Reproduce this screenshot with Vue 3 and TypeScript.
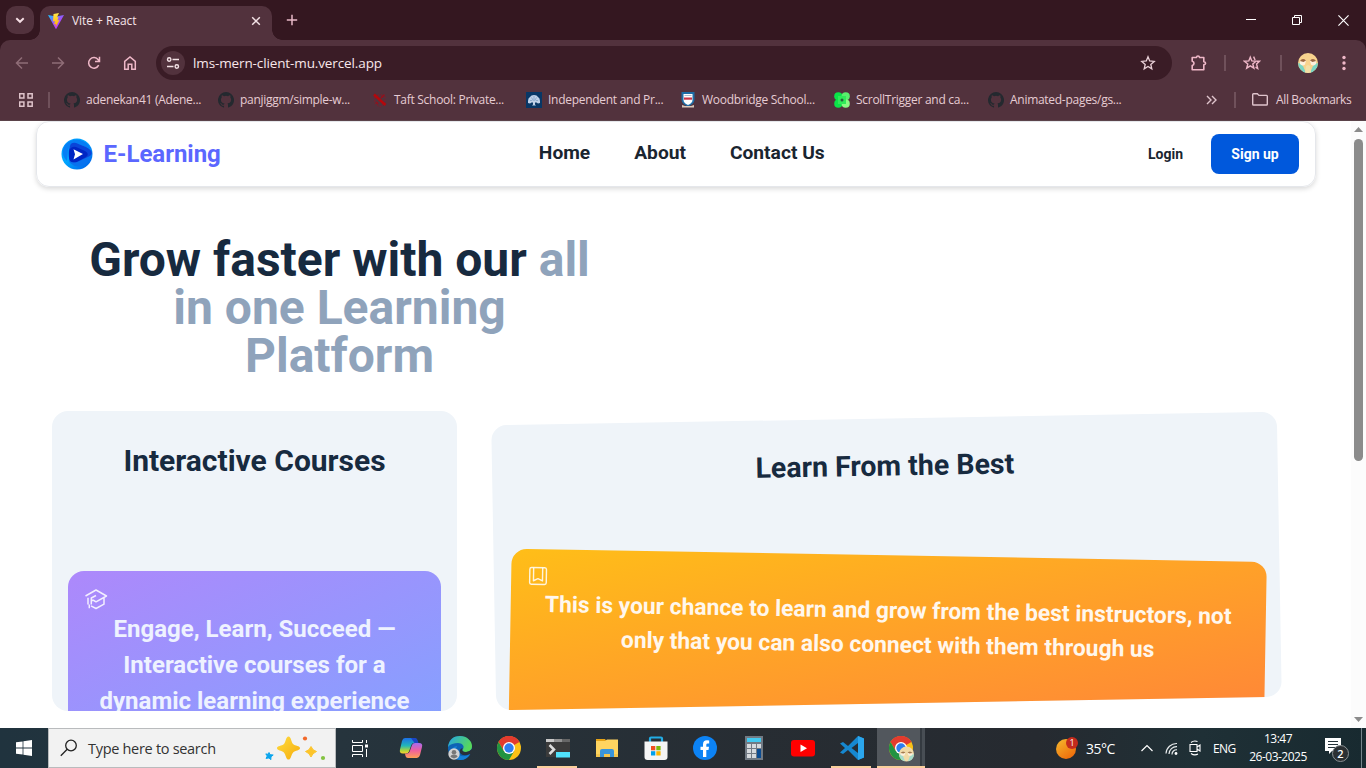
<script setup lang="ts">
interface Bookmark { icon: string; label: string }

const bookmarks: Bookmark[] = [
  { icon: 'github', label: 'adenekan41 (Adene...' },
  { icon: 'github', label: 'panjiggm/simple-w...' },
  { icon: 'taft', label: 'Taft School: Private...' },
  { icon: 'tree', label: 'Independent and Pr...' },
  { icon: 'crest', label: 'Woodbridge School...' },
  { icon: 'clover', label: 'ScrollTrigger and ca...' },
  { icon: 'github', label: 'Animated-pages/gs...' },
]

const links: string[] = ['Home', 'About', 'Contact Us']

const apps: string[] = ['copilot', 'edge', 'chrome', 'terminal', 'files', 'store', 'facebook', 'calc', 'youtube', 'vscode', 'chromeUser']
const running = new Set<string>(['terminal', 'vscode', 'chromeUser'])
</script>

<template>
  <div class="screen">
    <header class="browser">
      <div class="tabstrip">
        <button class="tab-menu"><svg width="12" height="12" viewBox="0 0 12 12"><path d="M2.300 4.200 6 7.800l3.700-3.600" fill="none" stroke="#f6dfe5" stroke-width="1.900" /></svg></button>
        <div class="tab">
          <svg class="vite" width="16" height="16" viewBox="0 0 32 32">
            <defs>
              <linearGradient id="va" x1="0" y1="0" x2=".7" y2=".9"><stop stop-color="#14c8ff" /><stop offset=".6" stop-color="#a050fc" /><stop offset="1" stop-color="#bd34fe" /></linearGradient>
              <linearGradient id="vb" x1=".4" y1="0" x2=".5" y2="1"><stop stop-color="#ffe84a" /><stop offset="1" stop-color="#ffa800" /></linearGradient>
            </defs>
            <path d="M0 4 16 7 32 4 17 31q-1 1.5-2 0Z" fill="url(#va)" />
            <path d="m22 0-11 2-1 15 4-1-2 7 4-1-1 7 8-15-4 1 2-7-3 .5Z" fill="url(#vb)" />
          </svg>
          <span class="tab-title">Vite + React</span>
          <svg class="close" width="10" height="10" viewBox="0 0 10 10"><path d="m1.2 1.2 7.6 7.6m0-7.6L1.2 8.8" stroke="#f3e2e6" stroke-width="1.5" /></svg>
        </div>
        <svg class="plus" width="12" height="12" viewBox="0 0 12 12"><path d="M6 .8v10.4M.8 6h10.4" stroke="#e8b9c6" stroke-width="1.5" /></svg>
        <div class="window-buttons">
          <svg width="10" height="10" viewBox="0 0 10 10"><path d="M0 4.5h10" stroke="#fff" /></svg>
          <svg width="10" height="10" viewBox="0 0 10 10"><path d="M.5 2.5h7v7h-7ZM2.5 2.5v-2h7v7h-2" fill="none" stroke="#fff" /></svg>
          <svg width="11" height="11" viewBox="0 0 10 10"><path d="m.4.4 9.2 9.2m0-9.2L.4 9.6" stroke="#fff" stroke-width="1.05" /></svg>
        </div>
      </div>

      <div class="toolbar">
        <svg class="nav-btn dim" width="16" height="16" viewBox="0 0 16 16"><path d="M14 8H3m5-5.5L2.5 8 8 13.500" /></svg>
        <svg class="nav-btn dim" width="16" height="16" viewBox="0 0 16 16"><path d="M2 8h11M8 2.500 13.500 8 8 13.500" /></svg>
        <svg class="nav-btn" width="16" height="16" viewBox="0 0 16 16"><path d="M12.700 10.200A5.300 5.300 0 1 1 12.200 4.700L13.500 6.300M13.500 1.800v4.700H9" /></svg>
        <svg class="nav-btn" width="16" height="16" viewBox="0 0 16 16"><path d="M2.700 14.200V6.300L8 2l5.300 4.300v7.900H9.800V9.300H6.200v4.900Z" /></svg>
        <div class="address">
          <span class="site-info"><svg width="14" height="14" viewBox="0 0 14 14"><path d="M6.500 3.500H13M1 10.500h6.500" stroke="#f3e2e6" stroke-width="1.5" /><circle cx="3.200" cy="3.500" r="1.700" fill="none" stroke="#f3e2e6" stroke-width="1.400" /><circle cx="10.800" cy="10.500" r="1.700" fill="none" stroke="#f3e2e6" stroke-width="1.400" /></svg></span>
          <span class="url">lms-mern-client-mu.vercel.app</span>
          <svg class="star" width="16" height="16" viewBox="0 0 16 16"><path d="m8 1.800 1.700 4.200 4.500.4-3.400 3 1 4.400L8 11.500l-3.800 2.300 1-4.400-3.400-3L6.300 6Z" fill="none" stroke="#ead1d8" stroke-width="1.300" /></svg>
        </div>
        <svg class="ext" width="18" height="18" viewBox="0 0 18 18"><path d="M2.200 3.500h4.300q.1-1.500 1.500-1.500T9.500 3.500h4.300v4.300q1.800.2 1.800 1.500t-1.800 1.500v5H2.200v-4.300Q4 11 4 9.300T2.200 7.200Z" fill="none" stroke="#efb8c8" stroke-width="1.600" stroke-linejoin="round" /></svg>
        <i class="divider d1"></i>
        <svg class="fav" width="18" height="18" viewBox="0 0 18 18"><path d="m7.300 3.200 1.500 3.700 4.300.3-3.300 2.800 1.100 4.200-3.600-2.300-3.600 2.300 1.100-4.200-3.400-2.800 4.400-.3ZM10.600 2.600l1.500 3.400M13.800 7.200h2.700l-2.900 2.700 1.100 4.600-2.200-1.300" fill="none" stroke="#efb8c8" stroke-width="1.400" /></svg>
        <i class="divider d2"></i>
        <svg class="avatar" width="20" height="20" viewBox="0 0 20 20"><circle cx="10" cy="10" r="10" fill="#f8d38e" /><path d="M0 10q3 0 5 3l3 6.800Q1 18 0 10M20 10q-3 0-5 3l-3 6.800q7-1.800 8-9.800" fill="#7ad6c4" /><path d="M2 8.500q2-3 6-1l-1 4q-3 2-5-.5ZM18 8.500q-2-3-6-1l1 4q3 2 5-.5Z" fill="#fff0dc" /><path d="M2 8q2.500-3.500 6-.5L5.500 9Zm16 0q-2.500-3.500-6-.5L14.500 9Z" fill="#9c6843" /><path d="m8 13 2-1 2 1 1 6.500-3 .5-3-.5Z" fill="#f4dfa6" /></svg>
        <svg class="dots" width="4" height="16" viewBox="0 0 4 16"><g fill="#efb8c8"><circle cx="2" cy="2.500" r="1.700" /><circle cx="2" cy="8" r="1.700" /><circle cx="2" cy="13.500" r="1.700" /></g></svg>
      </div>

      <div class="bookmarks">
        <svg class="grid-icon" width="14" height="14" viewBox="0 0 14 14"><path d="M.7.7h4.200v4.200H.7ZM9 .7h4.200v4.200H9ZM.7 9h4.200v4.200H.7ZM9 9h4.200v4.200H9Z" fill="none" stroke="#dec3ca" stroke-width="1.500" /></svg>
        <i class="divider"></i>
        <div class="bookmark-list">
          <div v-for="(b, i) in bookmarks" :key="i" class="bookmark">
            <svg width="16" height="16" viewBox="0 0 16 16">
              <path v-if="b.icon === 'github'" fill="#24292f" d="M8 0a8 8 0 0 0-2.530 15.590c.4.070.550-.170.550-.380v-1.490c-2.230.480-2.700-.950-2.700-.950-.360-.920-.890-1.170-.890-1.170-.730-.500.050-.490.050-.490.810.060 1.230.830 1.230.830.720 1.230 1.880.870 2.340.670.070-.520.280-.870.510-1.070-1.780-.200-3.640-.890-3.640-3.950 0-.870.310-1.590.820-2.150-.080-.200-.360-1.020.080-2.120 0 0 .670-.210 2.200.820a7.700 7.700 0 0 1 4 0c1.530-1.040 2.200-.820 2.200-.820.440 1.100.160 1.920.080 2.120.510.560.820 1.270.820 2.150 0 3.070-1.870 3.750-3.650 3.950.290.250.540.730.540 1.480v2.200c0 .210.150.460.550.380A8 8 0 0 0 8 0" />
              <g v-else-if="b.icon === 'taft'"><path d="M2.500 3h10.500v8.500L8 15l-5-3.500Z" fill="none" stroke="#8c1727" stroke-dasharray="1.500 1.500" /><path d="M2 2.500 13.500 13" stroke="#b4070b" stroke-width="2.500" /><path d="m12 3-3 3M4 10l2 2" stroke="#9b0d18" stroke-width="1.500" /></g>
              <g v-else-if="b.icon === 'tree'"><path fill="#083766" d="M0 0h16v16H0z" /><path d="M2 9q0-3 2-4 1-2 4-2t4 2q2 1 2 4v2l-2 .5-1.500-1-1.500 0v2l1 1H6l1-1v-2H5.500L4 11.500 2 11Z" fill="#bfd1e8" /><path d="M4 8.500h2m4 0h2M5.500 5.500 7.500 9m3-3.500L8.500 9M8 4v4" stroke="#6f94ba" stroke-width=".6" fill="none" /></g>
              <g v-else-if="b.icon === 'crest'"><path d="M1.500 0h13v8q-.5 4-6.500 6.500Q2 12 1.500 8Z" fill="#1d6da6" /><path d="M3.500 2h9v6q0 3-4.500 5-4.500-2-4.500-5Z" fill="#fff" /><path d="M4 5.500h8v2.200H4z" fill="#c83346" /><path d="M4.500 3h7v1h-7z" fill="#a9bccd" /><path d="m2 13 3 1h6l3-1v2.500H2Z" fill="#d8c7ba" /></g>
              <g v-else><circle cx="4.300" cy="4.300" r="4.100" fill="#0ae448" /><circle cx="11.700" cy="4.300" r="4.100" fill="#59f06c" /><circle cx="4.300" cy="11.700" r="4.100" fill="#0ae448" /><circle cx="11.700" cy="11.700" r="4.100" fill="#8bfa83" /><path d="M4 4h8v8H4z" fill="#2fea58" /><circle cx="8" cy="8" r="1.500" fill="#28613c" /></g>
            </svg>
            <span>{{ b.label }}</span>
          </div>
        </div>
        <svg class="more" width="12" height="10" viewBox="0 0 12 10"><path d="m1 1 4 4-4 4m5-8 4 4-4 4" fill="none" stroke="#dfc4cc" stroke-width="1.400" /></svg>
        <i class="divider d3"></i>
        <svg class="folder" width="16" height="13" viewBox="0 0 16 13"><path d="M.7 11.200V1.500q0-.8.8-.8h3.800L7 2.400h7.500q.8 0 .8.800v8q0 .8-.8.800h-13q-.8 0-.8-.8Z" fill="none" stroke="#dfc4cc" stroke-width="1.400" /></svg>
        <span class="all">All Bookmarks</span>
      </div>
    </header>

    <main class="viewport">
      <div class="page">
        <nav class="navbar">
          <div class="brand">
            <svg width="32" height="32" viewBox="0 0 32 32">
              <defs><linearGradient id="lg" x1="0" y1="0" x2="1" y2="1"><stop stop-color="#0096ff" /><stop offset=".45" stop-color="#00a6ff" /><stop offset="1" stop-color="#0057e6" /></linearGradient></defs>
              <circle cx="16" cy="16" r="15.500" fill="url(#lg)" />
              <path d="M4 7Q12-1 22 3q5 2 8 8L17 6Q9 5 7 12L6 23Q-1 16 4 7" fill="#067ef5" />
              <path d="M9 8q1-4 6-3l10 4q9 5 4 9l-11 7q-9 4-10-5-1-7 1-12Z" fill="#0a44d8" />
              <path d="M8 13q2-5 7-4l9 4q5 3 1 6l-9 5q-8 2-8-5Z" fill="#0026c4" />
              <path d="M7 20q2 6 9 4l13-6-3 7q-9 7-17 0Z" fill="#0872ee" />
              <path d="m12.500 11.200 9.500 4.900-9.500 5.300 1.500-5.200Z" fill="#fff" />
            </svg>
            <span>E-Learning</span>
          </div>
          <div class="links"><a v-for="l in links" :key="l">{{ l }}</a></div>
          <div class="account"><a class="login">Login</a><button class="signup">Sign up</button></div>
        </nav>

        <section class="content">
          <h2 class="headline">Grow faster with our <span>all in one Learning Platform</span></h2>
          <div class="cards">
            <article class="card">
              <h3>Interactive Courses</h3>
              <div class="panel purple">
                <svg width="24" height="24" viewBox="0 0 24 24"><path d="M1.500 9 12 3l10.500 6L12 14.800 9 13M12 8.500 7.300 11v6.500M20 10.500v6.700L12 21.500l-5-2.700M4 10.700v6.800M5.300 17.500v3.700M7.300 14l1.700-1" /></svg>
                <p>Engage, Learn, Succeed — Interactive courses for a dynamic learning experience</p>
              </div>
            </article>
            <article class="card tilted">
              <h3>Learn From the Best</h3>
              <div class="panel orange">
                <svg width="24" height="24" viewBox="0 0 24 24"><rect x="3.500" y="3.500" width="17.500" height="17.500" rx="1.800" /><path d="M7.500 3.500v13.800l4.700-2.200 4.800 2.200V3.500" /></svg>
                <p>This is your chance to learn and grow from the best instructors, not only that you can also connect with them through us</p>
              </div>
            </article>
          </div>
        </section>
      </div>
      <aside class="scrollbar">
        <svg width="9" height="5" viewBox="0 0 9 5"><path d="M4.500 0 9 5H0Z" fill="#8b8b8b" /></svg>
        <i></i>
        <svg class="down" width="9" height="5" viewBox="0 0 9 5"><path d="M0 0h9L4.500 5Z" fill="#8b8b8b" /></svg>
      </aside>
    </main>

    <footer class="taskbar">
      <div class="start"><svg width="16" height="16" viewBox="0 0 16 16"><path d="m0 2.300 6.600-.9v6.200H0Zm7.400-1L16 0v7.600H7.400ZM0 8.400h6.600v6.200L0 13.700Zm7.400 0H16V16l-8.600-1.200Z" fill="#fff" /></svg></div>
      <div class="search">
        <svg width="18" height="18" viewBox="0 0 18 18"><circle cx="11" cy="6.500" r="5.300" /><path d="m7.200 10.300-6.400 6.500" /></svg>
        <span>Type here to search</span>
        <svg class="sparkles" width="62" height="26" viewBox="0 0 62 26">
          <defs><linearGradient id="sp" x1="0" y1="0" x2="1" y2="1"><stop stop-color="#ffdc41" /><stop offset="1" stop-color="#f5ac0b" /></linearGradient></defs>
          <path d="M23.500 1.500c2.600 0 2.600 5.500 4.600 7.600 2 2 6.900 1.800 6.900 4.100s-4.900 2-6.900 4.200c-2 2.100-2 7.100-4.600 7.100s-2.600-5-4.600-7.100c-2-2.200-6.900-1.900-6.900-4.200s4.900-2.100 6.900-4.100c2-2.100 2-7.600 4.600-7.600Z" fill="url(#sp)" />
          <path d="M46 11.500q1.500 4 5.500 5-4 1.500-5.500 5.500-1.500-4-5.500-5.500 4-1 5.500-5Z" fill="#fcc42a" stroke="#fcc42a" stroke-linejoin="round" />
          <path d="m4 17.500 1 2.200 3.200.3-2.200 1.700-.2 3-1.800-1.800-3 .5 1.300-2.400L.8 18.900l2.500.4Z" fill="#0aa5ed" stroke="#0aa5ed" stroke-linejoin="round" />
          <circle cx="40" cy="3.500" r="2.100" fill="#f2692a" /><circle cx="58" cy="23" r="2.100" fill="#83c341" />
        </svg>
      </div>
      <div class="taskview"><svg width="17" height="17" viewBox="0 0 17 17"><path d="M.5 0v2.500h10V0M.5 17v-2.500h10V17M.5 5.500h10v6H.5ZM14.500 0v3M14.500 9v8" fill="none" stroke="#fff" /><path d="M13 4.500h3v3h-3z" fill="#fff" /></svg></div>
      <div v-for="a in apps" :key="a" class="app" :class="{ running: running.has(a), active: a === 'chromeUser' }">
        <svg width="24" height="24" viewBox="0 0 24 24">
          <g v-if="a === 'copilot'">
            <defs>
              <linearGradient id="c1" x1="0" y1="0" x2="0" y2="1"><stop stop-color="#1c6fe8" /><stop offset=".5" stop-color="#22b7b8" /><stop offset=".8" stop-color="#a9d53e" /><stop offset="1" stop-color="#ffd02c" /></linearGradient>
              <linearGradient id="c2" x1="0" y1="0" x2="0" y2="1"><stop stop-color="#a56bf0" /><stop offset=".5" stop-color="#f0609d" /><stop offset="1" stop-color="#ff9f55" /></linearGradient>
            </defs>
            <path d="M6 2h9q2 0 2.700 2L19 7h-4q-2 0-2.700 2L10 15.500q-.7 2-3 2H4q-4 0-3-4L3 5q.8-3 3-3Z" fill="url(#c1)" />
            <path d="M18 22H9q-2 0-2.500-2L6 17.500h2q2 0 2.700-2L13 9q.7-2 3-2h4q4 0 3 4l-2 8q-.8 3-3 3Z" fill="url(#c2)" />
            <path d="M12 2h4q2 0 2.500 2l1 3h-4Z" fill="#1b45c4" />
          </g>
          <g v-else-if="a === 'edge'">
            <defs><linearGradient id="e1" x1="0" y1="0" x2="1" y2=".4"><stop stop-color="#24a4e8" /><stop offset="1" stop-color="#57d95b" /></linearGradient></defs>
            <circle cx="12" cy="12" r="12" fill="#0d63b5" />
            <path d="M0 11C1 3 6 0 12 0c7 0 12 5 12 10 0 4-3 6-6 6-4 0-4-2-3-3 2-3-1-6-5-6S2 8 0 11Z" fill="url(#e1)" />
            <path d="M9 10q-3 6 2 9 5 3 11-1-3 6-10 6Q2 23 4 13q2-3 5-3Z" fill="#1480d7" />
            <path d="M14.500 12q-1.500 4 3.500 4 3 0 6-3v6l-2-1q-7 3-10-1-1-4 2.500-5Z" fill="#28313a" />
            <circle cx="6" cy="18" r="5.700" fill="#d2d2d2" /><circle cx="6" cy="16.300" r="2.300" fill="#777" /><path d="M2.500 21q0-2.500 3.500-2.500T9.500 21L6 22.500Z" fill="#777" />
          </g>
          <g v-else-if="a === 'chrome' || a === 'chromeUser'">
            <circle cx="12" cy="12" r="12" fill="#fbc116" />
            <path d="M12 12 1.600 6A12 12 0 0 1 22.400 6Z" fill="#e33b2e" /><path d="M12 6h10.400A12 12 0 0 0 1.600 6l5.200 9Z" fill="#e33b2e" />
            <path d="M1.600 6A12 12 0 0 0 12 24l5.200-9L12 12l-5.200 3Z" fill="#229342" />
            <circle cx="12" cy="12" r="6" fill="#fff" /><circle cx="12" cy="12" r="4.700" fill="#2f7df0" />
            <g v-if="a === 'chromeUser'"><circle cx="17.500" cy="18" r="7.500" fill="#f2dba6" /><path d="M10 18q3 0 4 2l2 5.300q-5.500-1-6-7.300m15 0q-3 0-4 2l-2 5.300q5.500-1 6-7.300" fill="#a5dccb" /><path d="M11.500 17q2-2.500 5-.5l-1 3q-3 1-4-1Zm12 0q-2-2.500-5-.5l1 3q3 1 4-1Z" fill="#fff1dc" /><path d="M11.500 17q2-2.800 5-.5l-2 1Zm12 0q-2-2.800-5-.5l2 1Z" fill="#a47b4c" /></g>
          </g>
          <g v-else-if="a === 'terminal'"><path d="M0 3h24v18H0z" fill="#3b3b3b" /><path d="M0 3h8v3H0z" fill="#c8c8c8" /><path d="M8 3h8v3H8z" fill="#929292" /><path d="M16 3h8v3h-8z" fill="#666" /><path d="m3.500 9 4.500 4.500L3.500 18" fill="none" stroke="#ddd" stroke-width="2.500" /><path d="M10 16h14v5.500H10z" fill="#50e2fb" /></g>
          <g v-else-if="a === 'files'"><path d="M1 3h9l2 3H1z" fill="#e6a317" /><path d="M1 5h9l2-1.500h11V21H1z" fill="#ffd460" /><path d="M1 18h22v3H1z" fill="#f5c54d" /><path d="M5 21v-6q0-2 2-2h10q2 0 2 2v6h-4v-3H9v3Z" fill="#3994da" /></g>
          <g v-else-if="a === 'store'"><path d="M6 6V2.500Q6 1.500 7 1.500h10q1 0 1 1V6" fill="none" stroke="#22ace4" stroke-width="2.200" /><path d="M.5 5.500h23V21q0 3-3 3h-17q-3 0-3-3Z" fill="#f5f5f5" /><path d="M7 10h4.300v4.300H7z" fill="#f04e1f" /><path d="M12.300 10h4.300v4.300h-4.300z" fill="#7cb80a" /><path d="M7 15.200h4.300v4.300H7z" fill="#00a1eb" /><path d="M12.300 15.200h4.300v4.300h-4.300z" fill="#fbb500" /></g>
          <g v-else-if="a === 'facebook'"><circle cx="12" cy="12" r="12" fill="#0c83f5" /><path d="M10 21v-7H7.500v-3.300H10V8.500Q10 4.300 14 4.300l2.200.2v2.900h-1.500q-1.400 0-1.400 1.400v1.900H16l-.5 3.300h-2.200v7Z" fill="#fff" /></g>
          <g v-else-if="a === 'calc'"><path d="M3 0h18v24H3z" fill="#717a84" /><path d="M5 2h14v4H5z" fill="#43c9f0" /><path d="M5 8h4v4H5zm5 0h4v4h-4zm5 0h4v4h-4zM5 13h4v4H5zm5 0h4v4h-4zM5 18h4v4H5zm5 0h4v4h-4z" fill="#d6dade" /><path d="M15 13h4v9h-4z" fill="#0b4c91" /></g>
          <g v-else-if="a === 'youtube'"><rect y="4" width="24" height="16.500" rx="3" fill="#f00" /><path d="m9.500 8.500 6.500 3.700-6.500 3.700Z" fill="#fff" /></g>
          <g v-else-if="a === 'vscode'"><path d="M18 0 24 2.500v19L18 24 8 14l-5 4-3-1.500L5 12 0 7.500 3 6l5 4Z" fill="#1688d0" /><path d="m18 0 6 2.500v19L18 24Z" fill="#2ba6ed" /><path d="m18 7-6.500 5 6.500 5Z" fill="#252e35" /></g>
        </svg>
      </div>
      <div class="tray">
        <svg class="weather" width="24" height="24" viewBox="0 0 24 24"><defs><linearGradient id="w" x1="0" y1="0" x2=".7" y2="1"><stop stop-color="#f4b92e" /><stop offset="1" stop-color="#ef6c0b" /></linearGradient></defs><circle cx="11" cy="13" r="10" fill="url(#w)" /><circle cx="17" cy="7" r="6" fill="#c42b1c" /><text x="17" y="10.300" text-anchor="middle" font-size="9" fill="#fff">1</text></svg>
        <span class="temp">35°C</span>
        <svg class="chev" width="12" height="8" viewBox="0 0 12 8"><path d="m.5 7 5.500-5.500L11.500 7" fill="none" stroke="#fff" stroke-width="1.200" /></svg>
        <svg class="wifi" width="13" height="13" viewBox="0 0 13 13"><path d="M1 11.500A10.500 10.500 0 0 1 12 1.500M4 12A7.500 7.500 0 0 1 12 4.700M7 12.500A4.500 4.500 0 0 1 12 7.800" fill="none" stroke="#e8eced" stroke-width="1.200" /><circle cx="11" cy="11.500" r="1.400" fill="#fff" /></svg>
        <svg class="cam" width="12" height="16" viewBox="0 0 12 16"><path d="M1 4.500h7v7H1ZM8 7l3-2v6L8 9M2 2.500Q5 0 8.500 1.500M2 13.500q3.500 2.500 7 .5" fill="none" stroke="#fff" stroke-width="1.100" /></svg>
        <span class="lang">ENG</span>
        <div class="clock"><span>13:47</span><span>26-03-2025</span></div>
        <svg class="notif" width="26" height="26" viewBox="0 0 26 26"><path d="M1 1h16v13H8l-3 3v-3H1Z" fill="#fff" /><path d="M4 4.500h10M4 7.500h10M4 10.500h8" stroke="#26343a" /><circle cx="16.500" cy="16.500" r="8" fill="#2b3033" stroke="#8a9093" /><text x="16.500" y="20.500" text-anchor="middle" font-size="11" font-weight="600" fill="#fff">2</text></svg>
        <i class="desktop-edge"></i>
      </div>
    </footer>
  </div>
</template>

<style>
html, body { margin: 0; overflow: hidden; }
</style>

<style scoped>
* { box-sizing: border-box; }
svg { display: block; flex: none; }
button { border: 0; padding: 0; font: inherit; }
.screen { width: 1366px; height: 768px; display: flex; flex-direction: column; overflow: hidden; background: #fff; font-family: "Open Sans", "Noto Sans", sans-serif; }

.browser { height: 121px; flex: none; background: #341720; color: #e6ccd3; }
.tabstrip { height: 40px; display: flex; align-items: center; padding-left: 6px; }
.tab-menu { width: 28px; height: 28px; border-radius: 10px; background: #52323d; display: grid; place-items: center; }
.tab { position: relative; width: 232px; height: 34px; margin: 6px 0 0 6px; padding: 0 11px 5px 8px; background: #52323d; border-radius: 10px 10px 0 0; display: flex; align-items: center; }
.tab::before, .tab::after { content: ""; position: absolute; bottom: 0; width: 10px; height: 10px; }
.tab::before { left: -10px; background: radial-gradient(circle at 0 0, transparent 9.500px, #52323d 10px); }
.tab::after { right: -10px; background: radial-gradient(circle at 100% 0, transparent 9.500px, #52323d 10px); }
.tab-title { margin-left: 8px; font-size: 12px; letter-spacing: -.05px; color: #f5e4e8; flex: 1; line-height: 16px; }
.plus { margin-left: 14px; }
.window-buttons { margin-left: auto; display: flex; gap: 36px; padding-right: 17px; align-items: center; }
.toolbar { height: 46px; background: #52323d; border-radius: 10px 10px 0 0; display: flex; align-items: center; padding-left: 14px; }
.nav-btn { margin-right: 20px; fill: none; stroke: #efb8c8; stroke-width: 1.500; }
.nav-btn.dim { stroke: #8f6d77; }
.address { margin-left: -2px; width: 1016px; height: 34px; border-radius: 17px; background: #3a1c26; display: flex; align-items: center; padding: 0 16px 0 5px; }
.site-info { width: 24px; height: 24px; border-radius: 50%; background: #52323d; display: grid; place-items: center; }
.url { margin-left: 8px; flex: 1; color: #f8e7eb; font-size: 13.500px; letter-spacing: -.12px; line-height: 20px; }
.divider { width: 2px; height: 16px; background: #70515b; flex: none; }
.ext { margin-left: 18px; }
.d1 { margin-left: 16px; }
.fav { margin-left: 17px; }
.d2 { margin-left: 19px; }
.avatar { margin-left: 16px; }
.dots { margin-left: 24px; }
.bookmarks { height: 35px; background: #52323d; display: flex; align-items: center; padding: 0 0 7px 19px; border-bottom: 1px solid #5b434a; font-size: 12px; }
.bookmarks > .divider { margin-left: 15px; }
.bookmark-list { display: flex; margin-left: 14px; }
.bookmark { width: 154px; display: flex; align-items: center; gap: 6px; white-space: nowrap; letter-spacing: -.28px; line-height: 16px; }
.more { margin-left: 64px; }
.bookmarks > .d3 { margin-left: 16px; }
.folder { margin-left: 16px; }
.all { margin-left: 8px; letter-spacing: -.35px; white-space: nowrap; }

.viewport { height: 607px; flex: none; display: flex; font-family: Roboto, sans-serif; }
.page { width: 1351px; overflow: hidden; }
.navbar { width: 1280px; height: 66px; margin: 0 35px 0 36px; padding: 0 16px 0 23.500px; border: 1px solid #e5e7eb; border-radius: 13px; box-shadow: 0 2px 5px rgba(0, 0, 0, .15); display: grid; grid-template-columns: 1fr auto 1fr; align-items: center; color: #1a2530; }
.brand { display: flex; align-items: center; gap: 11px; font-size: 24px; font-weight: 700; color: #5b67ff; letter-spacing: -.02px; }
.brand span { line-height: 32px; }
.links { display: flex; gap: 44px; font-size: 19.200px; line-height: 24px; padding-bottom: 2px; font-weight: 700; transform: translateX(2px); }
.account { display: flex; align-items: center; justify-content: flex-end; gap: 28px; font-size: 14px; font-weight: 700; }
.login { line-height: 18px; padding-bottom: 1px; }
.signup { width: 88px; height: 40px; border-radius: 8px; background: #0058dc; color: #fff; padding-bottom: 1px; }
.content { padding: 49px 52px 0; color: #172a3f; }
.headline { width: 511px; margin: 0 0 31px 32px; text-align: center; font-size: 48px; line-height: 48px; font-weight: 700; }
.headline span { color: #8fa3bb; }
.cards { display: grid; grid-template-columns: 405px 827px; gap: 16px; }
.card { position: relative; height: 300px; border-radius: 16px; overflow: hidden; background: #eff4f9; padding: 32px; }
.tilted { transform: rotate(-1deg) scale(.95); }
.card h3 { margin: 0; text-align: center; font-size: 30px; line-height: 36px; font-weight: 700; }
.panel { position: absolute; left: 16px; right: 16px; top: 128px; bottom: 0; padding: 16px; border-radius: 16px 16px 0 0; transform: translateY(32px); }
.panel svg { fill: none; stroke: rgba(255, 255, 255, .85); stroke-width: 1.500; stroke-linejoin: round; }
.panel p { margin: 0; text-align: center; font-size: 24px; line-height: 36px; font-weight: 700; }
.purple { background: linear-gradient(to bottom right, #ad88fb, #83a2ff); color: #eef2ff; }
.orange { background: linear-gradient(to bottom right, #ffbe18, #ff8439); color: #fff7ed; transform: translateY(16px) rotate(2deg); }
.scrollbar { width: 15px; background: #fcfcfc; display: flex; flex-direction: column; align-items: center; padding: 6px 0; }
.scrollbar i { width: 9px; height: 322px; border-radius: 5px; background: #8b8b8b; margin-top: 7px; }
.down { margin-top: auto; }

.taskbar { height: 40px; flex: none; display: flex; color: #fff; background: linear-gradient(90deg, #20333e 0, #26343d 25%, #272d33 55%, #262a30 76%, #1f3036 88%, #182a30 100%); }
.start { width: 48px; display: grid; place-items: center; }
.search { width: 288px; height: 40px; border: 1px solid #b9bbbd; background: #f2f2f2; color: #333; display: flex; align-items: center; padding-left: 11px; }
.search > svg:first-child { fill: none; stroke: #222; stroke-width: 1.300; }
.search span { margin-left: 10px; width: 128px; white-space: nowrap; font-size: 14.500px; letter-spacing: -.3px; }
.sparkles { margin-left: 49px; }
.taskview { width: 50px; display: grid; place-items: center; padding-right: 1px; }
.app { width: 49px; display: grid; place-items: center; position: relative; }
.app svg { overflow: visible; }
.running::after { content: ""; position: absolute; bottom: 0; left: 4px; right: 5px; height: 2px; background: #f9cf9c; }
.active { background: linear-gradient(90deg, transparent 1px, #52575d 1px 44px, #343a40 44px 46px, #484e54 46px); }
.active::after { left: 1px; right: 0; }
.tray { margin-left: auto; display: flex; align-items: center; width: 311px; }
.temp { margin-left: 7px; width: 30px; font-size: 14px; letter-spacing: -.5px; white-space: nowrap; }
.chev { margin-left: 25px; }
.wifi { margin-left: 12px; }
.cam { margin-left: 11px; }
.lang { margin-left: 12px; width: 23px; font-size: 12px; letter-spacing: -.6px; }
.clock { margin-left: 11px; width: 62px; display: flex; flex-direction: column; align-items: center; font-size: 12px; line-height: 18px; letter-spacing: -.5px; white-space: nowrap; }
.notif { margin-left: 15px; margin-top: 4px; }
.desktop-edge { width: 1px; height: 40px; margin-left: 11px; background: #75858b; }
</style>
